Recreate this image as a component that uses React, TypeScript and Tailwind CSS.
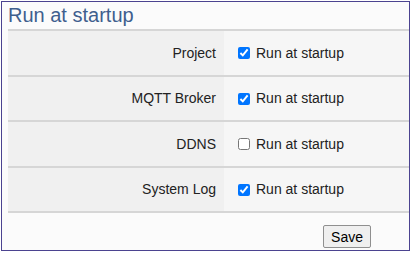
import { useState } from 'react'

const rows = [
  { name: 'Project', on: true, h: 'h-[46px]' },
  { name: 'MQTT Broker', on: true, h: 'h-[45px]' },
  { name: 'DDNS', on: false, h: 'h-[46px]' },
  { name: 'System Log', on: true, h: 'h-[45px]' },
]

function App() {
  const [checked, setChecked] = useState(rows.map((r) => r.on))

  return (
    <div className="w-[413px] h-[254px] bg-white pt-px pl-px font-['Liberation_Sans',Arial,sans-serif]">
      <div className="w-[409px] h-[250px] border border-[#4b4390] bg-[#fbfbfb] flex flex-col">
        <h1 className="h-[27px] pl-[6px] pt-px text-[20px] leading-[25px] text-[#3f5f8e]">Run at startup</h1>
        <div className="ml-[6px] border-t-2 border-[#d6d6d6]">
          {rows.map((r, i) => (
            <div key={r.name} className={`flex border-b-2 border-[#d6d6d6] ${r.h}`}>
              <div className="w-[216px] bg-[#f0f0f0] flex items-center justify-end pr-[8px] text-[14px] text-[#222]">
                {r.name}
              </div>
              <label className="flex-1 bg-[#f6f6f6] flex items-center pl-[14px] text-[14px] text-[#222]">
                <input
                  type="checkbox"
                  className="w-[12px] h-[12px] m-0 mr-[6px] accent-[#0075ff]"
                  checked={checked[i]}
                  onChange={() => setChecked(checked.map((c, j) => (j === i ? !c : c)))}
                />
                Run at startup
              </label>
            </div>
          ))}
        </div>
        <div className="flex justify-end pr-[38px] pt-[12px]">
          <button className="h-[23px] px-[7px] border border-[#8f8f8f] rounded-[2px] bg-[#efefef] text-[14px] leading-[20px] text-black">
            Save
          </button>
        </div>
      </div>
    </div>
  )
}

export default App
